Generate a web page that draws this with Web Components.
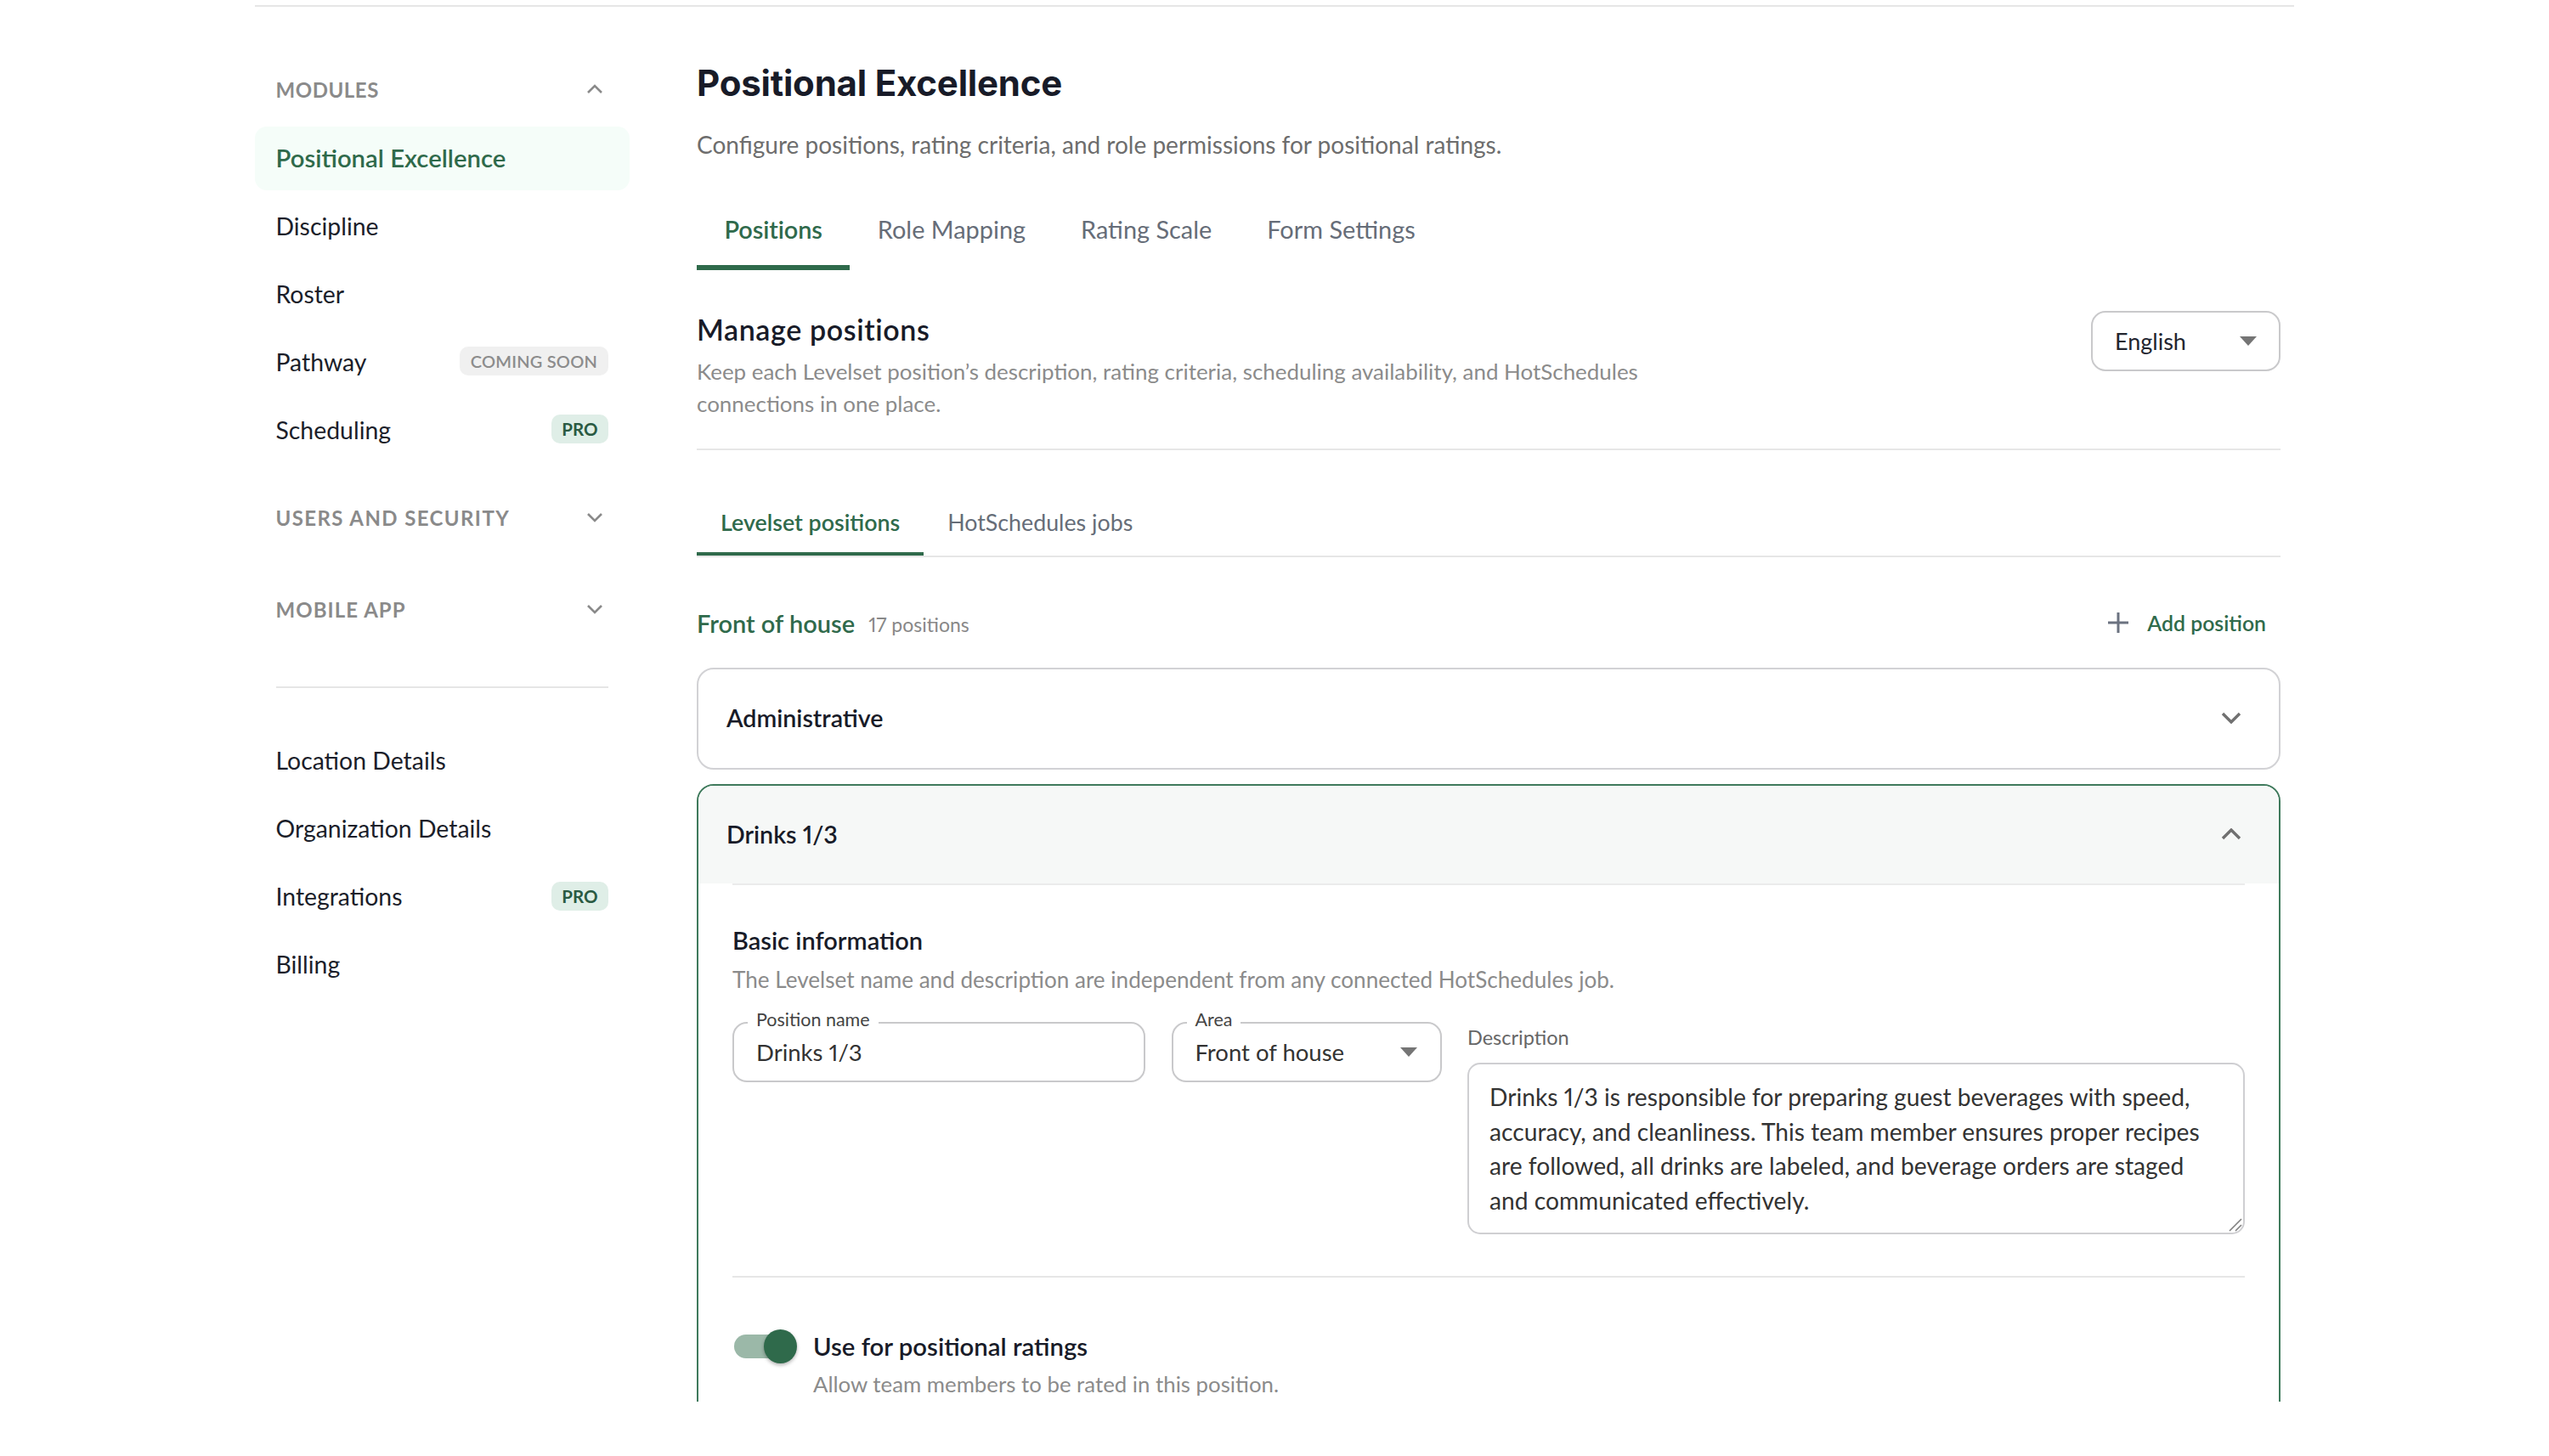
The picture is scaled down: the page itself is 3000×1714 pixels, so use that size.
<!doctype html>
<html lang="en"><head><meta charset="utf-8"><title>Positional Excellence</title>
<style>
html,body{margin:0;background:#fff;height:1714px;overflow:hidden}
body{font-family:"Lato","Liberation Sans",sans-serif;color:#1a1d29;--green:#2f6a4b;--line:#e6e6e6;--border:#c9c9cb;font-variant-numeric:proportional-nums}
</style></head><body>
<app-shell>
  <side-nav slot="side">
    <nav-head open style="letter-spacing:.55px">MODULES</nav-head>
    <nav-item active>Positional Excellence</nav-item>
    <nav-item>Discipline</nav-item>
    <nav-item>Roster</nav-item>
    <nav-item>Pathway<ui-badge slot="end" kind="soon">COMING SOON</ui-badge></nav-item>
    <nav-item>Scheduling<ui-badge slot="end">PRO</ui-badge></nav-item>
    <nav-head style="margin-top:40px;margin-bottom:58px;letter-spacing:1.4px">USERS AND SECURITY</nav-head>
    <nav-head style="letter-spacing:1.05px">MOBILE APP</nav-head>
    <nav-rule></nav-rule>
    <nav-item>Location Details</nav-item>
    <nav-item>Organization Details</nav-item>
    <nav-item>Integrations<ui-badge slot="end">PRO</ui-badge></nav-item>
    <nav-item>Billing</nav-item>
  </side-nav>
  <page-head>Positional Excellence<span slot="sub">Configure positions, rating criteria, and role permissions for positional ratings.</span></page-head>
  <tab-bar>
    <tab-item active>Positions</tab-item>
    <tab-item>Role Mapping</tab-item>
    <tab-item>Rating Scale</tab-item>
    <tab-item>Form Settings</tab-item>
  </tab-bar>
  <manage-head>Manage positions<span slot="desc">Keep each Levelset position’s description, rating criteria, scheduling availability, and HotSchedules connections in one place.</span><lang-select slot="end">English</lang-select></manage-head>
  <sub-tabs>
    <sub-tab active>Levelset positions</sub-tab>
    <sub-tab>HotSchedules jobs</sub-tab>
  </sub-tabs>
  <area-head count="17 positions">Front of house<add-button slot="end">Add position</add-button></area-head>
  <pos-card>Administrative</pos-card>
  <pos-card open>Drinks 1/3
    <card-section slot="body" sub="The Levelset name and description are independent from any connected HotSchedules job.">Basic information</card-section>
    <field-row slot="body">
      <ui-field label="Position name" style="width:486px">Drinks 1/3</ui-field>
      <ui-field label="Area" select style="width:318px">Front of house</ui-field>
      <ui-text label="Description" style="width:915px">Drinks 1/3 is responsible for preparing guest beverages with speed, accuracy, and cleanliness. This team member ensures proper recipes are followed, all drinks are labeled, and beverage orders are staged and communicated effectively.</ui-text>
    </field-row>
    <card-rule slot="body"></card-rule>
    <toggle-row slot="body" sub="Allow team members to be rated in this position.">Use for positional ratings</toggle-row>
  </pos-card>
</app-shell>
<script>
const CHEV_DOWN='M2 2 L10 10 L18 2';
function def(name,css,html,init){
  customElements.define(name,class extends HTMLElement{
    connectedCallback(){
      if(this.shadowRoot)return;
      const r=this.attachShadow({mode:'open'});
      const h=typeof html==='function'?html(this):html;
      r.innerHTML='<style>:host{box-sizing:border-box}*{box-sizing:border-box}'+css+'</style>'+h;
      if(init)init(this,r);
    }
  });
}
def('app-shell',`:host{display:flex;width:2400px;height:1644px;margin:6px 0 0 300px;border-top:2px solid var(--line);overflow:hidden}
 .side{flex:0 0 441px}.main{flex:0 0 1864px;margin-left:79px;padding-top:65px}`,
 `<div class="side"><slot name="side"></slot></div><div class="main"><slot></slot></div>`);
def('side-nav',`:host{display:block;padding-top:72px}`,`<slot></slot>`);
def('nav-head',`:host{display:flex;align-items:center;justify-content:space-between;height:50px;padding:0 25px 0 24.5px;margin-bottom:19px;font-size:24px;font-weight:700;letter-spacing:.85px;color:#8a8a8a}
 svg{width:32px;height:14px;display:block;fill:none;stroke:#8a8a8a;stroke-width:2.6}`,
 h=>`<span><slot></slot></span><svg viewBox="-6 0 32 12" aria-hidden="true"><path d="${h.hasAttribute('open')?'M2 10 L10 2 L18 10':CHEV_DOWN}"/></svg>`);
def('nav-item',`:host{display:flex;align-items:center;justify-content:space-between;height:75px;margin-bottom:5px;padding:0 25px 2px 24.5px;border-radius:14px;font-size:28.4px;color:#1b1e2a}
 :host([active]){background:#f5fdf9;color:var(--green);font-weight:600;font-size:29.3px}`,
 `<span><slot></slot></span><slot name="end"></slot>`);
def('nav-rule',`:host{display:block;height:2px;margin:66px 25px 48.5px;background:var(--line)}`,``);
def('ui-badge',`:host{display:inline-flex;align-items:center;height:34px;padding:0 12.5px;border-radius:10px;font-size:20.5px;font-weight:700;background:#dfeee7;color:#2a5a42;margin-top:-1px}
 :host([kind=soon]){background:#f0f0f0;color:#8c8c8c;font-weight:600;font-size:20px;letter-spacing:.2px;padding:0 13px}`,`<slot></slot>`);
def('page-head',`:host{display:block}
 h1{margin:0;font:700 42px/50px "Inter","Lato",sans-serif;letter-spacing:-.2px;color:#181b28}
 p{margin:27px 0 0;font-size:28px;line-height:40px;color:#6d6d6d}`,
 `<h1><slot></slot></h1><p><slot name="sub"></slot></p>`);
def('tab-bar',`:host{display:flex;margin-top:42px}`,`<slot></slot>`);
def('tab-item',`:host{display:block;padding:18px 32.5px 0;height:86px;font-size:28.9px;line-height:40px;color:#666d78;border-bottom:6px solid transparent}
 :host([active]){color:var(--green);font-weight:600;border-bottom-color:var(--green);letter-spacing:-.1px}`,`<slot></slot>`);
def('manage-head',`:host{display:flex;justify-content:space-between;align-items:flex-start;margin-top:48px;padding-bottom:34px;border-bottom:2px solid var(--line)}
 .t{width:1180px}
 h2{margin:0 0 8px;font-size:34px;line-height:44px;font-weight:600;letter-spacing:.6px;color:#181b28}
 p{margin:0;font-size:25.95px;line-height:38px;color:#8b8b8b}`,
 `<div class="t"><h2><slot></slot></h2><p><slot name="desc"></slot></p></div><slot name="end"></slot>`);
def('lang-select',`:host{display:flex;align-items:center;justify-content:space-between;width:223px;height:71px;padding:0 26px 1px 26px;border:2px solid var(--border);border-radius:17px;font-size:27px;color:#22252f}
 svg{width:20px;height:11px;display:block;fill:#757575}`,
 `<slot></slot><svg viewBox="0 0 20 11" aria-hidden="true"><path d="M0 0H20L10 11Z"/></svg>`);
def('sub-tabs',`:host{display:flex;margin-top:48px;border-bottom:2px solid var(--line)}`,`<slot></slot>`);
def('sub-tab',`:host{display:block;height:56px;margin-top:20px;padding:0 28px;font-size:26.8px;line-height:34px;color:#666d78;border-bottom:4px solid transparent}
 :host([active]){color:var(--green);font-weight:600;border-bottom-color:var(--green)}`,`<slot></slot>`);
def('area-head',`:host{display:flex;justify-content:space-between;align-items:center;height:46px;margin-top:56px;padding:0 17px 3px 0}
 .l{display:flex;align-items:center;gap:16px}
 b{font-size:29px;font-weight:600;color:var(--green)}
 span{font-size:23px;color:#888;padding-top:3px}`,
 h=>`<div class="l"><b><slot></slot></b><span>${h.getAttribute('count')}</span></div><slot name="end"></slot>`);
def('add-button',`:host{display:flex;align-items:center;gap:22px;font-size:24.8px;font-weight:600;color:var(--green)}
 svg{width:24px;height:24px;display:block;stroke:#6b7280;stroke-width:3;fill:none;margin-top:-1px}`,
 `<svg viewBox="0 0 24 24" aria-hidden="true"><path d="M12 0V24M0 12H24"/></svg><slot></slot>`);
def('pos-card',`:host{display:block;margin-top:17px;border:2px solid #d2d2d5;border-radius:20px;background:#fff}
 :host(:first-of-type){margin-top:28px}
 :host([open]){border-color:#3f7a5c;padding-bottom:80px}
 .h{display:flex;align-items:center;justify-content:space-between;height:116px;padding:0 44px 2px 33px;font-size:28.6px;font-weight:600;color:#181b28;border-radius:18px 18px 0 0}
 :host([open]) .h{background:#f6f8f7;height:115px}
 svg{width:24px;height:14px;display:block;fill:none;stroke:#707070;stroke-width:3.4}
 .b{padding:0 40px}.b hr{margin:0;border:0;height:2px;background:#ebebeb}`,
 h=>{const o=h.hasAttribute('open');return `<div class="h"><span><slot></slot></span><svg viewBox="0 0 24 14" aria-hidden="true"><path d="${o?'M2 12 L12 2 L22 12':'M2 2 L12 12 L22 2'}"/></svg></div>`+(o?`<div class="b"><hr><slot name="body"></slot></div>`:'')});
def('card-section',`:host{display:block;padding-top:45px}
 h3{margin:0;font-size:29px;line-height:40px;font-weight:600;color:#181b28}
 p{margin:8px 0 1px;font-size:26.1px;line-height:36px;color:#8b8b8b}`,
 h=>`<h3><slot></slot></h3><p>${h.getAttribute('sub')}</p>`);
def('field-row',`:host{display:flex;align-items:flex-start;justify-content:space-between;margin-top:32px}`,`<slot></slot>`);
def('ui-field',`:host{display:flex;align-items:center;justify-content:space-between;position:relative;height:71px;padding:0 26px;border:2px solid var(--border);border-radius:17px;font-size:27.5px;color:#333}
 label{position:absolute;left:16px;top:-18px;height:26px;padding:0 10px;background:#fff;font-size:21.5px;line-height:26px;color:#444}
 svg{width:20px;height:11px;display:block;fill:#757575;margin-right:1px}`,
 h=>`<label>${h.getAttribute('label')}</label><span><slot></slot></span>`+(h.hasAttribute('select')?`<svg viewBox="0 0 20 11" aria-hidden="true"><path d="M0 0H20L10 11Z"/></svg>`:''));
def('ui-text',`:host{display:block;padding-top:2px}
 label{display:block;height:32px;margin-bottom:14px;font-size:23.5px;line-height:32px;color:#666}
 .a{position:relative;height:202px;padding:18px 30px 0 24px;border:2px solid #cfcfd2;border-radius:15px;font-size:28.2px;line-height:40.6px;color:#333}
 svg{position:absolute;right:1px;bottom:1px;width:16px;height:16px;stroke:#808080;stroke-width:1.6;fill:none}`,
 h=>`<label>${h.getAttribute('label')}</label><div class="a"><slot></slot><svg viewBox="0 0 16 16" aria-hidden="true"><path d="M1 15L15 1M8 15L15 8"/></svg></div>`);
def('card-rule',`:host{display:block;height:2px;margin-top:49px;background:var(--line)}`,``);
def('toggle-row',`:host{display:flex;gap:19px;margin-top:61px}
 .s{position:relative;flex:0 0 76px;height:40px}
 .s i{position:absolute;left:2px;top:6px;width:68px;height:28px;border-radius:14px;background:#9bb8a8}
 .s b{position:absolute;left:37px;top:0;width:39px;height:40px;border-radius:50%;background:var(--green);box-shadow:0 2px 4px rgba(0,0,0,.3)}
 .t{padding-top:0}
 h4{margin:0;font-size:29.3px;line-height:40px;font-weight:600;color:#181b28}
 p{margin:6px 0 1px;font-size:25.8px;line-height:36px;color:#8b8b8b}`,
 h=>`<div class="s"><i></i><b></b></div><div class="t"><h4><slot></slot></h4><p>${h.getAttribute('sub')}</p></div>`);
</script>
</body></html>
